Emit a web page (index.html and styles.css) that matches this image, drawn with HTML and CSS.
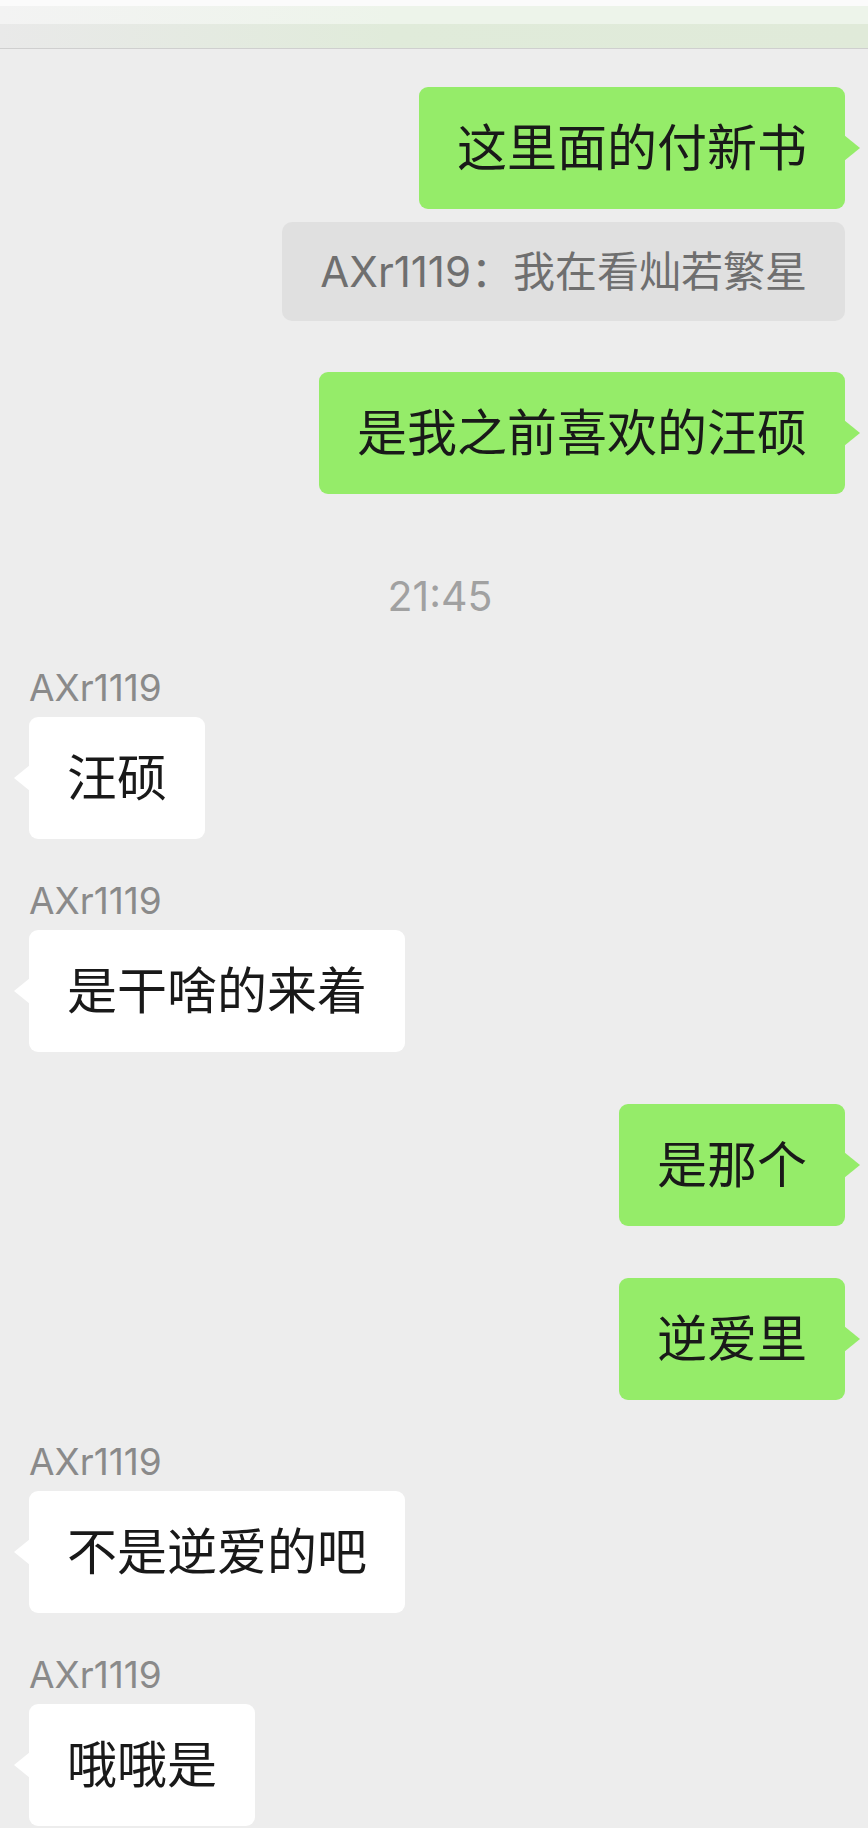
FILE: index.html
```html
<!DOCTYPE html>
<html lang="zh-CN">
<head>
<meta charset="UTF-8">
<title>AXr1119</title>
<link rel="stylesheet" href="styles.css">
</head>

<body>

<div class="topbar">
  <div class="topbar-light"></div>
  <div class="topbar-dark"></div>
</div>

<div class="chat">
  <div class="row mine">
    <div class="bubble green">这里面的付新书</div>
  </div>
  <div class="row mine quote-row">
    <div class="quote">AXr1119：我在看灿若繁星</div>
  </div>
  <div class="row mine">
    <div class="bubble green">是我之前喜欢的汪硕</div>
  </div>

  <div class="time">21:45</div>

  <div class="row theirs named">
    <div class="name">AXr1119</div>
    <div class="bubble white">汪硕</div>
  </div>
  <div class="row theirs named">
    <div class="name">AXr1119</div>
    <div class="bubble white">是干啥的来着</div>
  </div>
  <div class="row mine">
    <div class="bubble green">是那个</div>
  </div>
  <div class="row mine">
    <div class="bubble green">逆爱里</div>
  </div>
  <div class="row theirs named">
    <div class="name">AXr1119</div>
    <div class="bubble white">不是逆爱的吧</div>
  </div>
  <div class="row theirs named">
    <div class="name">AXr1119</div>
    <div class="bubble white">哦哦是</div>
  </div>
</div>

</body>
</html>
```

FILE: styles.css
```css
body {
  margin: 0;
  background-color: #ededed;
  font-family: Inter, "Noto Sans CJK SC", sans-serif;
  color: #191919;
  overflow: hidden;
}
.topbar {
  border-bottom: 1px solid #cfcfcf;
}
.topbar-light {
  height: 24px;
  background: linear-gradient(to bottom, #fbfbfb 0, #fbfbfb 6px, transparent 6px),
              linear-gradient(to right, #f3f3f3, #edf4ea 45%, #edf4ea);
}
.topbar-dark {
  height: 24px;
  background: linear-gradient(to right, #e9e9e9, #e0ebda 45%, #e0ead9);
}
.chat {
  display: flex;
  flex-direction: column;
  padding: 38px 23px 0 29px;
}
.row {
  display: flex;
  flex-direction: column;
  margin-top: 52px;
}
.row:first-child {
  margin-top: 0;
}
.row.mine {
  align-items: flex-end;
}
.row.theirs {
  align-items: flex-start;
}
.row.named {
  margin-top: 42px;
}
.row.quote-row {
  margin-top: 13px;
}
.quote-row + .row {
  margin-top: 51px;
}
.bubble {
  position: relative;
  font-size: 50px;
  line-height: 50px;
  padding: 36px 38px;
  border-radius: 9px;
  white-space: nowrap;
}
.bubble::after {
  content: "";
  position: absolute;
  top: 48px;
  width: 16px;
  height: 26px;
}
.green {
  background-color: #95ec69;
}
.green::after {
  right: -15px;
  background-color: #95ec69;
  clip-path: polygon(0 0, 100% 50%, 0 100%);
}
.white {
  background-color: #ffffff;
}
.white::after {
  left: -15px;
  background-color: #ffffff;
  clip-path: polygon(100% 0, 0 50%, 100% 100%);
}
.quote {
  background-color: #e0e0e0;
  color: #6f6f6f;
  font-size: 42px;
  line-height: 45px;
  padding: 27px 38px;
  border-radius: 10px;
  white-space: nowrap;
}
.time {
  margin-top: 82px;
  text-align: center;
  font-size: 41px;
  line-height: 40px;
  color: #a1a1a1;
  padding-left: 6px;
}
.time + .row.named {
  margin-top: 52px;
}
.name {
  font-size: 37px;
  line-height: 40px;
  color: #8a8a8a;
  margin: 0 0 9px 0;
}
```
